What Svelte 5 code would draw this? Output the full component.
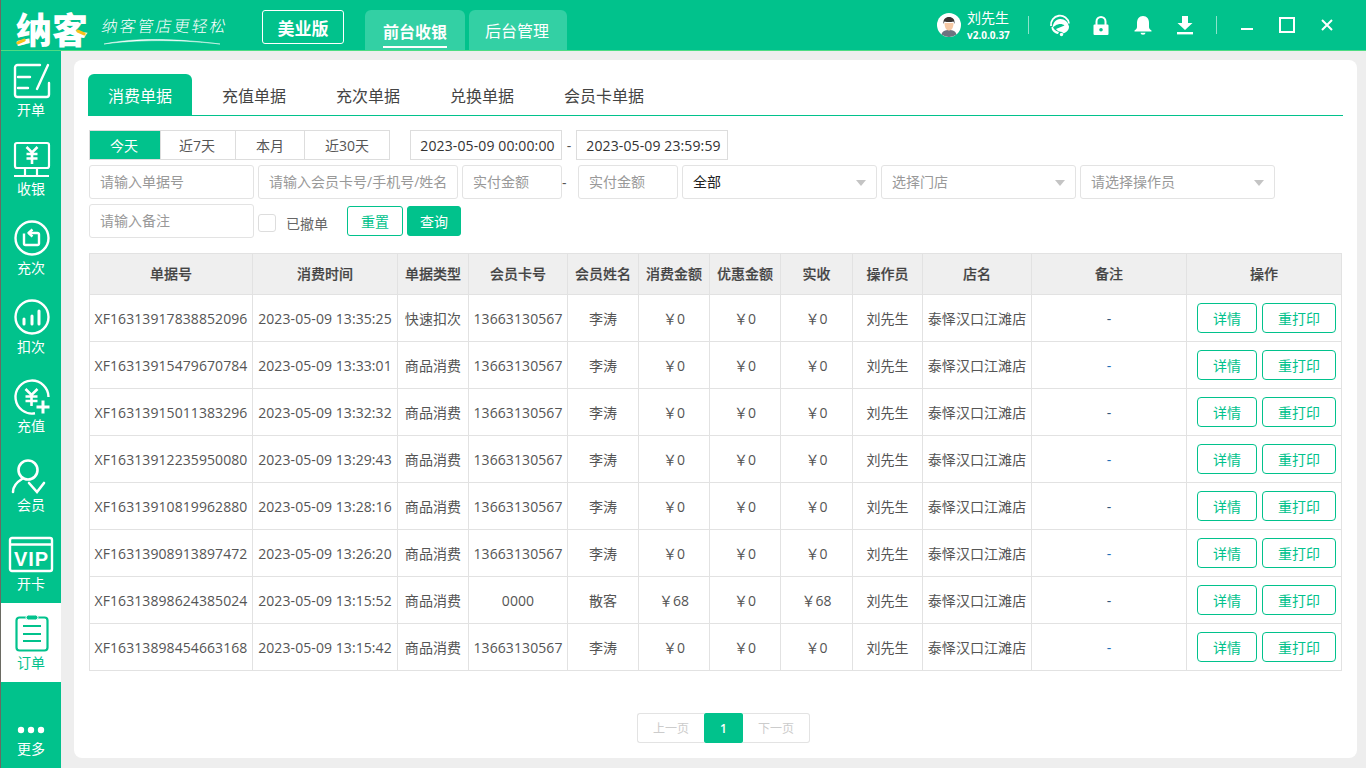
<script>
  const rows = [
    ['XF16313917838852096','2023-05-09 13:35:25','快速扣次','13663130567','李涛','￥0','￥0','￥0'],
    ['XF16313915479670784','2023-05-09 13:33:01','商品消费','13663130567','李涛','￥0','￥0','￥0'],
    ['XF16313915011383296','2023-05-09 13:32:32','商品消费','13663130567','李涛','￥0','￥0','￥0'],
    ['XF16313912235950080','2023-05-09 13:29:43','商品消费','13663130567','李涛','￥0','￥0','￥0'],
    ['XF16313910819962880','2023-05-09 13:28:16','商品消费','13663130567','李涛','￥0','￥0','￥0'],
    ['XF16313908913897472','2023-05-09 13:26:20','商品消费','13663130567','李涛','￥0','￥0','￥0'],
    ['XF16313898624385024','2023-05-09 13:15:52','商品消费','0000','散客','￥68','￥0','￥68'],
    ['XF16313898454663168','2023-05-09 13:15:42','商品消费','13663130567','李涛','￥0','￥0','￥0']
  ];
  const heads = ['单据号','消费时间','单据类型','会员卡号','会员姓名','消费金额','优惠金额','实收','操作员','店名','备注','操作'];
  const widths = ['c1','c2','c3','c4','c5','c5','c5','c8','c9','c10','c11','c11'];
  const tabs = ['消费单据','充值单据','充次单据','兑换单据','会员卡单据'];
  const ranges = [['今天','r1'],['近7天','r2'],['本月','r3'],['近30天','r4']];
</script>

<div class="app">
  <header class="top">
    <div class="logo">
      <span class="logo-name">纳客</span>
      <i class="acc acc1"></i><i class="acc acc2"></i>
      <span class="slogan">纳客管店更轻松</span>
      <svg class="swoosh" viewBox="0 0 116 8" width="116" height="8"><path d="M0 7C25 2 60 0 116 7C70 2 30 3 0 7Z" fill="#fff" stroke="#fff" stroke-width=".5"/></svg>
    </div>
    <div class="edition">美业版</div>
    <nav class="toptabs">
      <div class="toptab on"><span>前台收银</span></div>
      <div class="toptab"><span>后台管理</span></div>
    </nav>
    <div class="right">
      <div class="user">
        <svg class="avatar" viewBox="0 0 24 24" width="24" height="24">
          <circle cx="12" cy="12" r="12" fill="#fff"/>
          <path d="M4.500 21.500C5.500 18 8 17 12 17s6.500 1 7.500 4.500A12 12 0 0 1 12 24a12 12 0 0 1-7.500-2.500Z" fill="#6d7480"/>
          <path d="M7.500 10c0 5 2 7.500 4.500 7.500s4.500-2.500 4.500-7.500Z" fill="#f6c8a4"/>
          <path d="M6.500 11C6 6 8.500 4 12 4s6 2 5.500 7L16.500 8.500c-3 .8-6 .8-9 0Z" fill="#3a3432"/>
        </svg>
        <div class="who"><div class="name">刘先生</div><div class="ver">v2.0.0.37</div></div>
      </div>
      <i class="sep"></i>
      <div class="ib">
        <svg class="headset" viewBox="0 0 24 24" width="24" height="24" fill="none">
          <path d="M3 13A9 9 0 0 1 21 10.500" stroke="#fff" stroke-width="1.800"/>
          <path d="M12 6a8.500 8.500 0 0 1 9 7.500c0 4-3 6.500-6.500 7v-1.500c-3 0-5.500-1-6.500-3l8.500-3.500c-2-2-6-2-9 0L4.500 14.500C5 10 8 6 12 6Z" fill="#fff"/>
          <path d="M3.500 14c0 4 3 6.500 6.500 7l1-2c-3-1-5-2-6-5Z" fill="#fff"/>
          <circle cx="13.500" cy="21.500" r="1.700" fill="#fff"/>
        </svg>
      </div>
      <div class="ib">
        <svg viewBox="0 0 24 24" width="24" height="24" fill="none">
          <path d="M7.500 12V8.500a4.500 4.500 0 0 1 9 0V12" stroke="#fff" stroke-width="2"/>
          <path fill-rule="evenodd" d="M5.500 11.500h13a1 1 0 0 1 1 1V21a1 1 0 0 1-1 1h-13a1 1 0 0 1-1-1v-8.500a1 1 0 0 1 1-1ZM12 15a1.800 1.800 0 1 0 0 3.600A1.800 1.800 0 0 0 12 15Z" fill="#fff"/>
        </svg>
      </div>
      <div class="ib">
        <svg viewBox="0 0 24 24" width="24" height="24">
          <path d="M12 3c4 0 6 3 6 7v4c0 1.500 1 2.500 2.500 3.500v1h-17v-1C5 16.500 6 15.500 6 14v-4c0-4 2-7 6-7Z" fill="#fff"/>
          <path d="M9.500 19.800h5A2.500 2 0 0 1 9.500 19.800Z" fill="#fff"/>
        </svg>
      </div>
      <div class="ib">
        <svg viewBox="0 0 24 24" width="24" height="24">
          <path d="M9 3h6v7h4.500L12 17 4.500 10H9Z" fill="#fff"/>
          <rect x="4" y="19" width="16" height="2.400" fill="#fff"/>
        </svg>
      </div>
      <i class="sep"></i>
      <div class="wb"><i class="min"></i></div>
      <div class="wb"><i class="max"></i></div>
      <div class="wb">
        <svg viewBox="0 0 12 12" width="12" height="12"><path d="M1 1l10 10M11 1L1 11" stroke="#fff" stroke-width="2"/></svg>
      </div>
    </div>
  </header>

  <div class="body">
    <aside class="side">
      <div class="item">
        <svg viewBox="0 0 40 40" width="40" height="40" fill="none" stroke="#fff" stroke-width="2.400" stroke-linecap="round">
          <path d="M29 5H6.500A2.500 2.500 0 0 0 4 7.500V34.500A2.500 2.500 0 0 0 6.500 37H35.500A2.500 2.500 0 0 0 38 34.500V23"/>
          <path d="M7 17H19M7 28H17M26 29L37 5"/>
        </svg>
        <span>开单</span>
      </div>
      <div class="item">
        <svg viewBox="0 0 40 40" width="40" height="40" fill="none" stroke="#fff" stroke-width="2.200">
          <rect x="4" y="4" width="34" height="25" rx="2"/>
          <path d="M3 37H38M14 29V37M26 29V37"/>
          <path d="M15.500 8L21 13.500L26.500 8M15.500 15H26.500M15.500 19.500H26.500M21 13.500V25" stroke-width="2.600"/>
        </svg>
        <span>收银</span>
      </div>
      <div class="item">
        <svg viewBox="0 0 40 40" width="40" height="40" fill="none" stroke="#fff" stroke-width="2.400">
          <circle cx="21" cy="20" r="16.500"/>
          <path d="M21.500 11.500L17.500 15L21.500 18.500" stroke-linejoin="round"/>
          <path d="M18 15H26.500A1.500 1.500 0 0 1 28 16.500V25.500A1.500 1.500 0 0 1 26.500 27H14.500A1.500 1.500 0 0 1 13 25.500V15.500"/>
        </svg>
        <span>充次</span>
      </div>
      <div class="item">
        <svg viewBox="0 0 40 40" width="40" height="40" fill="none" stroke="#fff" stroke-width="2.400">
          <circle cx="21" cy="20" r="16.500"/>
          <path d="M13 22V27M21 19V27M28 14V27" stroke-width="3" stroke-linecap="round"/>
        </svg>
        <span>扣次</span>
      </div>
      <div class="item">
        <svg viewBox="0 0 40 40" width="40" height="40" fill="none" stroke="#fff" stroke-width="2.400">
          <path d="M37.500 21A16.500 16.500 0 1 0 24 37.300"/>
          <path d="M14.500 13L20.500 19L26.500 13M14.500 20.500H26.500M14.500 25H26.500M20.500 19V30" stroke-width="2.600"/>
          <path d="M25.500 31H38.500M32 24.500V37.500" stroke-width="3"/>
        </svg>
        <span>充值</span>
      </div>
      <div class="item">
        <svg viewBox="0 0 40 40" width="40" height="40" fill="none" stroke="#fff" stroke-width="2.600" stroke-linecap="round">
          <circle cx="17" cy="15" r="9.500"/>
          <path d="M2 37C2 31 6 27 11 24M18 28L26 37L33 28"/>
        </svg>
        <span>会员</span>
      </div>
      <div class="item">
        <svg class="vip" viewBox="0 0 40 40" width="40" height="40" fill="none" stroke="#fff" stroke-width="2.400">
          <rect x="-1" y="4" width="42" height="33" rx="2"/>
          <path d="M-1 10.500H41"/>
          <text x="20.500" y="31.500" text-anchor="middle" class="viptext">VIP</text>
        </svg>
        <span>开卡</span>
      </div>
      <div class="item active">
        <svg viewBox="0 0 40 40" width="40" height="40" fill="none" stroke="#01c28c" stroke-width="2.200">
          <rect x="5.500" y="4.500" width="31" height="33" rx="3"/>
          <rect x="15" y="2" width="12" height="5" rx="2.500" fill="#01c28c" stroke="#fff" stroke-width="1"/>
          <path d="M12 13H30M12 21H30M12 28H30"/>
        </svg>
        <span>订单</span>
      </div>
      <div class="item more">
        <svg viewBox="0 0 40 8" width="40" height="8"><circle cx="10" cy="4" r="3.200" fill="#fff"/><circle cx="20" cy="4" r="3.200" fill="#fff"/><circle cx="30" cy="4" r="3.200" fill="#fff"/></svg>
        <span>更多</span>
      </div>
    </aside>

    <main class="main">
      <section class="card">
        <div class="tabs">
          {#each tabs as t, i}
            <div class="tab" class:on={i === 0}>{t}</div>
          {/each}
        </div>

        <div class="row r-date">
          <div class="range">
            {#each ranges as [t, c], i}
              <div class="rg {c}" class:on={i === 0}>{t}</div>
            {/each}
          </div>
          <div class="date">2023-05-09 00:00:00</div>
          <span class="dash d1">-</span>
          <div class="date">2023-05-09 23:59:59</div>
        </div>

        <div class="row r-mid">
          <input class="f w165" placeholder="请输入单据号" />
          <input class="f w200" placeholder="请输入会员卡号/手机号/姓名" />
          <input class="f w100" placeholder="实付金额" />
          <span class="dash d2">-</span>
          <input class="f w100" placeholder="实付金额" />
          <div class="f sel val">全部<i class="tri"></i></div>
          <div class="f sel">选择门店<i class="tri"></i></div>
          <div class="f sel">请选择操作员<i class="tri"></i></div>
        </div>

        <div class="row r-bot">
          <input class="f w165" placeholder="请输入备注" />
          <span class="check"></span>
          <span class="chk-label">已撤单</span>
          <button class="btn ghost">重置</button>
          <button class="btn solid">查询</button>
        </div>

        <table>
          <colgroup>
            {#each widths as w}<col class={w} />{/each}
          </colgroup>
          <thead>
            <tr>{#each heads as h}<th>{h}</th>{/each}</tr>
          </thead>
          <tbody>
            {#each rows as r}
              <tr>
                {#each r as v}<td>{v}</td>{/each}
                <td>刘先生</td>
                <td>泰怿汉口江滩店</td>
                <td class="note">-</td>
                <td>
                  <div class="ops">
                    <button class="op o1">详情</button>
                    <button class="op o2">重打印</button>
                  </div>
                </td>
              </tr>
            {/each}
          </tbody>
        </table>

        <div class="pager">
          <div class="pg side-pg">上一页</div>
          <div class="pg cur">1</div>
          <div class="pg side-pg">下一页</div>
        </div>
      </section>
    </main>
  </div>
</div>

<style>
  :global(body) { margin: 0; background: #eee; }
  .app {
    --g: #01c28c;
    width: 1366px;
    height: 768px;
    overflow: hidden;
    display: flex;
    flex-direction: column;
    box-sizing: border-box;
    border-left: 1px solid #6a6a62;
    background: #eee;
    font-family: "Open Sans", "Noto Sans CJK SC", sans-serif;
    font-size: 14px;
    color: #555;
  }
  .top {
    height: 50px;
    flex: none;
    display: flex;
    align-items: flex-start;
    background: var(--g);
    border-bottom: 1px solid #4fdc83;
    color: #fff;
  }
  .logo { position: relative; width: 261px; height: 50px; flex: none; }
  .logo-name {
    position: absolute; left: 15px; top: 2px;
    font: 900 36px/52px "Noto Sans CJK SC", sans-serif;
    white-space: nowrap;
  }
  .acc { position: absolute; background: #f7c21a; height: 3px; border-radius: 2px; }
  .acc1 { left: 15px; top: 40px; width: 10px; transform: rotate(-25deg); }
  .acc2 { left: 75px; top: 31px; width: 10px; transform: rotate(25deg); }
  .slogan {
    position: absolute; left: 101px; top: 14px;
    font: 200 16px/22px "Noto Sans CJK SC", sans-serif;
    letter-spacing: 2px;
    transform: skewX(-10deg);
    white-space: nowrap;
  }
  .swoosh { position: absolute; left: 103px; top: 37px; }
  .edition {
    margin-top: 10px;
    width: 80px; height: 32px;
    border: 1px solid #fff;
    border-radius: 3px;
    display: flex; align-items: center; justify-content: center;
    font-family: "Noto Sans CJK SC", sans-serif;
    font-size: 17px; font-weight: 700;
  }
  .toptabs { display: flex; gap: 4px; margin-left: 21px; margin-top: 10px; }
  .toptab {
    width: 98px; height: 40px; box-sizing: border-box;
    padding-right: 2px;
    background: #33d0a4;
    border-radius: 6px 6px 0 0;
    display: flex; align-items: center; justify-content: center;
    font-size: 16px;
  }
  .toptab.on { width: 100px; padding-right: 0; font-weight: 700; }
  .toptab.on span { border-bottom: 2px solid #fff; line-height: 27px; margin-top: 7px; }
  .right { margin-left: auto; display: flex; align-items: center; height: 50px; padding-right: 19px; }
  .user { display: flex; align-items: center; gap: 6px; margin-right: 9px; }
  .avatar { display: block; }
  .who { width: 42px; }
  .name { font-size: 14px; line-height: 18px; }
  .ver { font-size: 10px; font-weight: 700; line-height: 14px; margin-top: 1px; white-space: nowrap; }
  .sep { width: 1px; height: 18px; background: rgba(255,255,255,.55); margin: 0 10px; }
  .user + .sep { margin-right: 9px; }
  .ib { width: 42px; display: flex; justify-content: center; }
  .ib svg { display: block; }
  .headset { transform: translateX(1px); }
  .wb { width: 40px; display: flex; justify-content: center; align-items: center; height: 20px; }
  .min { width: 12px; height: 2px; background: #fff; margin-top: 7px; }
  .max { width: 12px; height: 12px; border: 2px solid #fff; }

  .body { flex: 1; display: flex; min-height: 0; }
  .side {
    width: 60px; flex: none;
    background: var(--g);
    display: flex; flex-direction: column;
    color: #fff;
  }
  .item {
    height: 79px; box-sizing: border-box;
    padding-top: 10px;
    display: flex; flex-direction: column; align-items: center;
    flex: none;
  }
  .item:first-child { height: 78px; padding-top: 9px; }
  .item svg { display: block; overflow: visible; }
  .item span { line-height: 20px; font-size: 14px; }
  .item.active { background: #fff; color: var(--g); }
  .item.more { flex: 1; height: auto; justify-content: flex-end; padding: 0 0 9px; }
  .item.more svg { margin-bottom: 5px; }
  .viptext {
    font: 700 20px "Liberation Sans", sans-serif;
    fill: #fff; stroke: none; letter-spacing: 1px;
  }

  .main { flex: 1; min-width: 0; padding: 9px 9px 10px 13px; }
  .card {
    height: 100%; box-sizing: border-box;
    background: #fff; border-radius: 8px;
    padding: 14px 14px 0;
  }
  .tabs { display: flex; border-bottom: 1px solid var(--g); height: 41px; width: 1255px; }
  .tab {
    padding: 0 25px; height: 41px; line-height: 44px; font-size: 16px; color: #444;
  }
  .tab.on {
    background: var(--g); color: #fff; padding: 0 20px;
    border-radius: 6px 6px 0 0; margin-right: 5px;
  }
  .row { display: flex; align-items: center; margin-left: 1px; }
  .r-date { margin-top: 14px; height: 30px; }
  .r-mid { margin-top: 5px; height: 34px; gap: 4px; }
  .r-bot { margin-top: 5px; height: 34px; }
  .range { display: flex; border: 1px solid #ddd; box-sizing: border-box; height: 30px; margin-right: 20px; }
  .rg {
    display: flex; align-items: center; justify-content: center;
    border-left: 1px solid #ddd; box-sizing: border-box; color: #555;
  }
  .rg:first-child { border-left: 0; }
  .rg.on { background: var(--g); color: #fff; }
  .r1 { width: 70px; padding-right: 2px; } .r2 { width: 75px; padding-right: 2px; } .r3 { width: 69px; } .r4 { width: 85px; }
  .date {
    width: 152px; height: 30px; box-sizing: border-box;
    border: 1px solid #ddd;
    padding-left: 3px;
    display: flex; align-items: center; justify-content: center;
    color: #333;
    letter-spacing: .12px;
  }
  .dash { color: #555; width: 14px; text-align: center; }
  .r-mid .dash { width: 12px; margin-left: -4px; text-align: left; }
  .f {
    height: 34px; box-sizing: border-box; flex: none;
    border: 1px solid #e3e3e3; border-radius: 3px;
    padding: 0 10px 2px; font: inherit; color: #999;
    background: #fff; outline: none;
  }
  .f::placeholder { color: #999; opacity: 1; }
  .w165 { width: 165px; }
  .w200 { width: 200px; }
  .w100 { width: 100px; }
  .sel { width: 195px; position: relative; display: flex; align-items: center; }
  .val { color: #222; }
  .tri {
    position: absolute; right: 10px; top: 14px;
    width: 0; height: 0;
    border-left: 5.500px solid transparent; border-right: 5.500px solid transparent;
    border-top: 6.500px solid #c4c4c4;
  }
  .check {
    width: 18px; height: 18px; box-sizing: border-box;
    border: 1px solid #ddd; border-radius: 3px;
    margin: 4px 0 0 4px;
  }
  .chk-label { margin-left: 10px; color: #666; margin-top: 4px; }
  .btn {
    height: 30px; box-sizing: border-box; border-radius: 3px;
    font: inherit; padding: 0; cursor: pointer;
  }
  .ghost { width: 56px; margin-left: 19px; border: 1px solid var(--g); background: #fff; color: var(--g); }
  .solid { width: 54px; margin-left: 4px; border: 1px solid var(--g); background: var(--g); color: #fff; }

  table {
    margin: 15px 0 0 1px;
    width: 1253px;
    table-layout: fixed;
    border-collapse: collapse;
  }
  .c1 { width: 163px; } .c2 { width: 145px; } .c3 { width: 71px; } .c4 { width: 99px; }
  .c5 { width: 71px; } .c8 { width: 72px; } .c9 { width: 70px; } .c10 { width: 109px; } .c11 { width: 155px; }
  th, td { border: 1px solid #e2e2e2; padding: 0; text-align: center; white-space: nowrap; font-weight: 400; }
  th { height: 41px; box-sizing: border-box; padding-bottom: 2px; background: #efefef; color: #444; font-weight: 500; -webkit-text-stroke: .2px #444; }
  td { height: 46px; letter-spacing: .08px; }
  .note { color: #1d6fb8; }
  tr:nth-child(odd) .note { color: #34567a; }
  .ops { display: flex; gap: 5px; padding-left: 10px; }
  .op {
    height: 30px; box-sizing: border-box; padding: 0;
    border: 1px solid var(--g); border-radius: 4px;
    background: #fff; color: var(--g); font: inherit;
  }
  .o1 { width: 60px; } .o2 { width: 74px; }

  .pager { display: flex; justify-content: center; margin-top: 42px; padding-left: 16px; }
  .pg {
    height: 30px; box-sizing: border-box;
    display: flex; align-items: center; justify-content: center;
    font-size: 12px;
  }
  .side-pg { width: 67px; border: 1px solid #e3e3e3; color: #ccc; }
  .side-pg:first-child { border-right: 0; border-radius: 3px 0 0 3px; }
  .side-pg:last-child { border-left: 0; border-radius: 0 3px 3px 0; }
  .cur { width: 39px; background: var(--g); color: #fff; font-weight: 600; border-radius: 2px; }
</style>
